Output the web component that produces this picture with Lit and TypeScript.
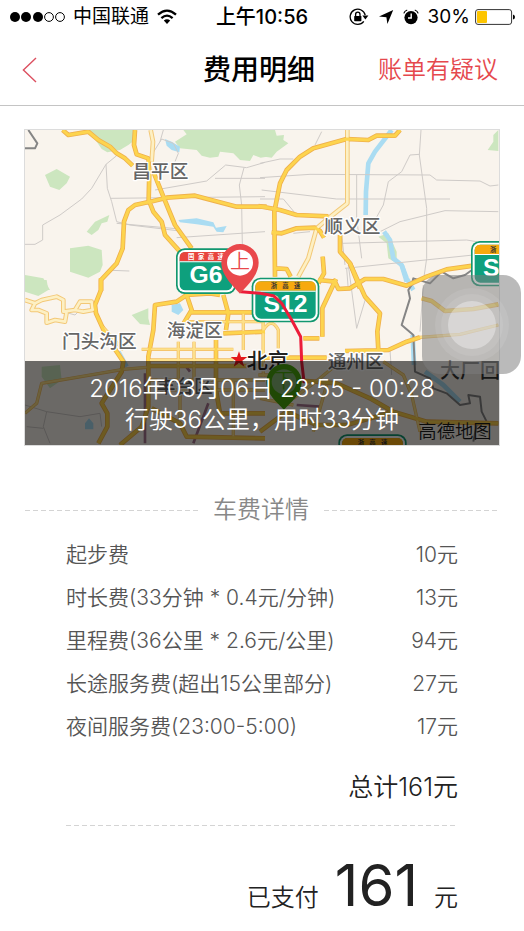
import { LitElement, html, svg, css } from "lit";
import { customElement } from "lit/decorators.js";

type Sheet = {
  shift: string;
  green: string;
  water: string;
  river: string;
  lane: string;
  road: string;
  minor: string;
  pale: string;
  border: string;
  rail: string;
};

// The map is drawn as four sheets, each with its own origin.
const SHEETS: Sheet[] = [
  {
    shift: "translate(-15 -15)",
    green:
      "M195 15L220 35 245 72 262 82 300 75 325 60 345 45 350 15ZM490 15L500 28 465 50 480 70 530 75 545 92 570 98 595 95 600 80 640 85 660 105 690 108 700 90 722 98 740 95V15ZM75 150L110 132 150 155 140 175 118 195 90 185ZM200 320L225 290 268 270 262 290 245 295 235 315 215 330ZM150 370L205 362 245 375 248 420 240 440 205 458 150 440ZM15 450L70 460 90 495H15Z",
    water:
      "M435 42L455 50 480 65 478 82 455 75 440 62ZM475 285L530 280 580 292 588 308 620 303 610 322 590 320 580 305 530 298 480 292Z",
    river: "",
    lane:
      "M15 358H45L68 345V300L120 270 185 222 215 190 258 118 290 92M258 118L262 190 275 230 290 290 330 300 480 318M290 295L480 312M272 220L735 215M405 195L560 168 617 120 680 128 735 112M470 338L735 320M672 128L658 180 665 240 667 360M585 160H735M395 90L425 42 460 55 475 85 465 110M275 436L328 438M420 50L430 15",
    road:
      "M128 15L145 30 205 20 235 45 270 65 290 85 315 100 338 122M345 15L342 60 350 88 385 100 388 140 386 225 400 260 425 290 435 330 480 380M400 140L430 215 465 300 515 370M243 498V465L290 415 308 370 312 290 325 255 345 240 400 228 440 218 525 212 650 245 740 245",
    minor: "",
    pale: "M392 15L399 50 395 110",
    border: "M25 15L52 55 45 70H15",
    rail: "",
  },
  {
    shift: "translate(705 -15)",
    green:
      "M-5 15V92L15 95 35 98 50 80 85 55 70 45 72 30 50 32 45 15ZM715 15L700 30 700 50 683 75 715 78ZM355 335L385 325 410 380 410 415 385 400 380 355Z",
    water: "",
    river: "M395 15L345 80 325 115 318 200 317 270M372 320L390 345 400 400 425 420 440 470",
    lane:
      "M0 115L60 102H100M0 158L150 148 510 150 530 165 660 168 690 183 715 180M5 195L230 222H570M483 15L478 90 500 250 500 400 490 470M478 88L450 90 425 140 385 170 370 240 345 285M290 150V280L305 400M360 320L420 290 555 257 715 260M100 325L150 320M245 355L620 345 650 350M255 430L640 390M260 430L265 495M185 20L165 60M0 222H70L110 270M245 330L255 420",
    road:
      "M-5 243L60 255 110 270 205 274M45 455L43 260 60 175 80 135 120 95 160 70 260 42 325 45 350 32 405 32 420 15M35 322L65 325 110 310 165 308 180 318 192 338M240 330V380L270 415 300 490M188 395L192 445 175 475M48 430L80 432 92 455",
    minor: "",
    pale: "M262 15V235L205 280 170 310 145 400 115 455",
    border: "",
    rail: "",
  },
  {
    shift: "translate(-15 450)",
    green:
      "M15 0H80L85 30 55 48 15 35ZM335 105L385 85V115L390 135 360 132ZM65 260L120 255 125 300 90 325 65 290Z",
    water: "M455 75L480 70 490 90 475 105 455 95ZM195 430L207 415 220 430V448H195Z",
    river: "M295 215L320 260",
    lane: "M15 375L80 395 180 410 240 400 245 440M80 395L70 440 90 490M130 95L165 105 180 90M20 440L70 445",
    road:
      "M243 -5V30L225 75 228 100 260 170 310 245 305 275 245 370 262 400V440L235 490M600 45L570 40 500 45 470 65 405 75 400 150 385 230V380L365 440 300 495M500 45L515 90 485 140M735 97H510M610 45L625 100 618 150M610 160L735 155M388 258H735M588 180V330L600 400 735 400M395 385L480 430 500 470 735 475",
    minor:
      "M15 400L50 370 65 310 310 268 380 262M365 208H640M490 125H735M475 185V300M522 185V300M390 240H640M385 300H735M730 100V290M670 100V210M420 330H735M480 300V420M640 300V470M248 140L310 210",
    pale:
      "M15 60L45 70 65 60 110 50 130 60V95L165 90 180 65H215L218 90 190 95 165 90M45 70L35 90 55 90 80 100V128L105 120 135 125 140 95",
    border: "",
    rail: "M375 280V490M565 370L520 490M500 262L510 275",
  },
  {
    shift: "translate(705 405)",
    green: "",
    water: "",
    river: "M425 0L440 40 460 75M458 210L462 300M495 320L550 360 600 410",
    lane: "M265 0L290 190 320 90M390 255L395 330M300 265L340 285M490 60L480 200",
    road:
      "M175 45L225 50 235 72 270 70 315 42 370 42 440 62 500 35 560 13 640 2M228 42L187 130V215M270 -5L315 95 360 145 352 200 355 255M255 258L385 255 440 230 480 217M485 100L515 108 555 138 640 132 715 118M130 220H178M-5 278H200M100 345L230 355 330 400 400 440 500 470 715 475M0 500L80 440 170 480 260 480 400 440",
    minor:
      "M10 175V275M10 195Q35 155 55 195V250M480 217L600 208 715 180M370 290L430 330 455 390 480 500M100 400L180 340 240 290M200 360L160 500M-5 330H60M0 400L100 420",
    pale: "",
    border:
      "M640 12L615 30 580 40 545 20 510 55 460 40 455 60 445 75 450 100 425 180 460 210 465 320 510 340 520 370 560 385 600 420 630 415 625 390 660 395 665 440 680 470 650 480 640 530",
    rail: "M110 420L180 425",
  },
];

const LABELS = [
  { text: "昌平区", x: 322, y: 145, kind: "district" },
  { text: "顺义区", x: 898, y: 310, kind: "district" },
  { text: "门头沟区", x: 111, y: 655, kind: "district" },
  { text: "海淀区", x: 425, y: 620, kind: "district" },
  { text: "通州区", x: 908, y: 715, kind: "district" },
  { text: "丰台区", x: 395, y: 790, kind: "district" },
  { text: "北京", x: 665, y: 715, kind: "city" },
  { text: "大厂回", x: 1245, y: 745, kind: "county" },
  { text: "高德地图", x: 1180, y: 924, kind: "brand" },
];

const SHIELDS = [
  { x: 453, y: 355, w: 180, h: 137, band: "#e8443c", ink: "#fff", top: "国家高速", name: "G6" },
  { x: 680, y: 443, w: 203, h: 134, band: "#f7a90f", ink: "#333", top: "浙高速", name: "S12" },
  { x: 1338, y: 333, w: 203, h: 136, band: "#f7a90f", ink: "#333", top: "浙高速", name: "S15" },
  { x: 940, y: 913, w: 205, h: 134, band: "#f7a90f", ink: "#333", top: "浙高速", name: "" },
];

const FARES = [
  ["起步费", "10元"],
  ["时长费(33分钟 * 0.4元/分钟)", "13元"],
  ["里程费(36公里 * 2.6元/公里)", "94元"],
  ["长途服务费(超出15公里部分)", "27元"],
  ["夜间服务费(23:00-5:00)", "17元"],
];

@customElement("route-map")
export class RouteMap extends LitElement {
  static styles = css`
    :host {
      display: block;
    }
    .canvas {
      display: block;
      width: 100%;
      height: 100%;
      font-family: "Liberation Sans", "Noto Sans CJK SC", sans-serif;
    }
    .line {
      fill: none;
      stroke-linejoin: round;
    }
    .green { fill: #cce6bf; }
    .water { fill: #aadcf2; }
    .river { stroke: #aadcf2; stroke-width: 14; }
    .lane { stroke: #cfcbc8; stroke-width: 3; }
    .pale-edge { stroke: #f3c877; stroke-width: 14; }
    .pale { stroke: #fdf0c4; stroke-width: 8; }
    .minor-edge { stroke: #f2bd62; stroke-width: 10; }
    .minor { stroke: #fde08a; stroke-width: 6; }
    .road-edge { stroke: #efb04c; stroke-width: 14; }
    .road { stroke: #fdd44e; stroke-width: 9; }
    .border { stroke: #858585; stroke-width: 6; }
    .rail { stroke: #a77790; stroke-width: 8; }
    .district,
    .city,
    .county {
      paint-order: stroke;
      stroke: #fff;
      stroke-width: 8;
      stroke-linejoin: round;
      font-weight: 500;
      fill: #666;
      font-size: 56px;
    }
    .city {
      fill: #222;
      font-size: 63px;
    }
    .county {
      fill: #333;
      font-size: 60px;
      stroke: none;
    }
    .brand {
      fill: #1c1c1c;
      font-size: 55px;
      font-weight: 350;
    }
    .band-text {
      font-size: 19px;
      font-weight: 700;
      text-anchor: middle;
      white-space: pre;
    }
    .shield-name {
      font-size: 74px;
      font-weight: 700;
      fill: #fff;
      text-anchor: middle;
    }
    .pin-text {
      font-size: 60px;
      font-weight: 350;
      text-anchor: middle;
    }
    .route {
      stroke: #ec1c3a;
      stroke-width: 9;
      stroke-linecap: round;
    }
  `;

  private layer(key: keyof Sheet, kind: string) {
    return SHEETS.map((s) => svg`<path transform=${s.shift} class=${kind} d=${s[key]}></path>`);
  }

  render() {
    return html`
      <svg class="canvas" viewBox="0 0 1422 945" preserveAspectRatio="xMidYMid slice" role="img" aria-label="行程地图">
        <rect width="1422" height="945" fill="#f9f4ed"></rect>
        ${this.layer("green", "green")} ${this.layer("water", "water")}
        ${this.layer("river", "line river")} ${this.layer("lane", "line lane")}
        ${this.layer("rail", "line rail")}
        ${this.layer("border", "line border")}
        ${this.layer("pale", "line pale-edge")} ${this.layer("minor", "line minor-edge")}
        ${this.layer("road", "line road-edge")} ${this.layer("pale", "line pale")}
        ${this.layer("minor", "line minor")} ${this.layer("road", "line road")}
        ${LABELS.map((l) => svg`<text class=${l.kind} x=${l.x} y=${l.y}>${l.text}</text>`)}
        <path fill="#e3191b" d="M642 664L648 681H667L652 692 658 710 642 699 626 710 632 692 617 681H636Z"></path>
        ${SHIELDS.map(
          (s) => svg`
            <g transform=${`translate(${s.x} ${s.y})`}>
              <rect width=${s.w} height=${s.h} rx="26" fill="#12976f"></rect>
              <rect x="5" y="5" width=${s.w - 10} height=${s.h - 10} rx="22" fill="#fff"></rect>
              <rect x="11" y="11" width=${s.w - 22} height=${s.h - 22} rx="17" fill="#0ea07d"></rect>
              <path fill=${s.band} d=${`M11 39V28Q11 11 28 11H${s.w - 28}Q${s.w - 11} 11 ${s.w - 11} 28V39Z`}></path>
              <path fill="#fff" d=${`M11 39H${s.w - 11}V42H11Z`}></path>
              <text class="band-text" x=${s.w / 2} y="32" fill=${s.ink}>${s.top.split("").join(s.top.length > 3 ? "  " : "   ")}</text>
              <text class="shield-name" x=${s.w / 2} y="104">${s.name}</text>
            </g>
          `,
        )}
        <path class="line route" d="M648 485L705 490 745 497 770 520 800 570 827 620 830 695 837 755"></path>
        <path fill="#e9484b" d="M645 491C635 478 589 440 589 398A56 56 0 0 1 701 398C701 440 655 478 645 491Z"></path>
        <circle cx="645" cy="398" r="39" fill="#fff"></circle>
        <text class="pin-text" x="645" y="417" fill="#e9484b">上</text>
        <path fill="#48a80c" d="M777 840C767 825 724 797 724 755A53 53 0 0 1 830 755C830 797 787 825 777 840Z"></path>
        <circle cx="777" cy="755" r="37" fill="#86b877"></circle>
        <text class="pin-text" x="777" y="774" fill="#48a80c">下</text>
      </svg>
    `;
  }
}

@customElement("app-root")
export class AppRoot extends LitElement {
  static styles = css`
    :host {
      display: block;
      min-height: 100vh;
      background: #fff;
      color: #222;
      font-family: Inter, "Noto Sans CJK SC", sans-serif;
    }
    .status {
      display: grid;
      grid-template-columns: 1fr auto 1fr;
      align-items: center;
      height: 34px;
      padding: 0 9px;
      color: #000;
      font-size: 19px;
      line-height: 24px;
    }
    .side {
      display: flex;
      align-items: center;
      gap: 8px;
    }
    .side.end {
      justify-content: flex-end;
      gap: 9px;
    }
    .power {
      display: flex;
      align-items: center;
      gap: 5px;
    }
    .clock {
      font-size: 20px;
      font-weight: 500;
    }
    svg {
      display: block;
    }
    .bar {
      display: grid;
      grid-template-columns: 1fr auto 1fr;
      align-items: center;
      height: 71px;
      padding: 0 26px 0 20px;
      border-bottom: 1px solid #c4c4c4;
    }
    .back,
    .touch {
      border: 0;
      padding: 0;
      background: none;
    }
    .back {
      justify-self: start;
    }
    .title {
      margin: 0;
      color: #000;
      font-size: 28px;
      line-height: 36px;
      font-weight: 500;
    }
    .dispute {
      justify-self: end;
      color: #e5484d;
      font-size: 24px;
      line-height: 36px;
      font-weight: 350;
      text-decoration: none;
    }
    .trip {
      position: relative;
      margin: 24px 25px 0;
    }
    .frame {
      position: relative;
      aspect-ratio: 474 / 315;
      outline: 1px solid #dcdcdc;
      overflow: hidden;
    }
    .map {
      height: 100%;
    }
    .caption {
      position: absolute;
      inset: auto 0 0 0;
      box-sizing: border-box;
      height: 84px;
      padding-top: 12px;
      background: rgba(0, 0, 0, 0.57);
      color: #fff;
      font-size: 24px;
      line-height: 31px;
      text-align: center;
      font-weight: 350;
    }
    .caption p {
      margin: 0;
    }
    .touch {
      position: absolute;
      top: 145px;
      right: -22px;
      display: grid;
      place-items: center;
      width: 99px;
      height: 99px;
      border-radius: 18px;
      background: rgba(125, 125, 125, 0.53);
    }
    .ring {
      display: grid;
      place-items: center;
      border-radius: 50%;
      background: rgba(255, 255, 255, 0.09);
    }
    .ring.outer {
      width: 74px;
      height: 74px;
    }
    .ring.middle {
      width: 62px;
      height: 62px;
    }
    .ring.inner {
      width: 48px;
      height: 48px;
      background: rgba(255, 255, 255, 0.35);
    }
    .section {
      display: flex;
      align-items: center;
      gap: 15px;
      margin: 47px 27px 0 25px;
      color: #888;
    }
    .section h2 {
      margin: 0;
      font-size: 24px;
      line-height: 36px;
      font-weight: 350;
    }
    .dash {
      flex: 1;
      height: 1px;
      background: repeating-linear-gradient(to right, #d4d4d4 0 5px, transparent 5px 8px);
    }
    .bill {
      padding: 5px 66px 0;
    }
    .fares {
      width: 100%;
      border-collapse: collapse;
      color: #555;
      font-size: 21px;
      font-weight: 350;
    }
    .fares th,
    .fares td {
      height: 43px;
      padding: 0;
      line-height: 30px;
      font-weight: inherit;
      text-align: left;
      white-space: nowrap;
    }
    .fares td {
      text-align: right;
    }
    .fares tfoot td {
      height: 77px;
      color: #222;
      font-size: 25px;
    }
    .bill .dash {
      flex: none;
    }
    .paid {
      display: flex;
      justify-content: flex-end;
      align-items: baseline;
      gap: 16px;
      margin: 23px 0 0;
      font-size: 24px;
      line-height: 72px;
      font-weight: 350;
    }
    .amount {
      font-size: 58px;
      font-weight: 400;
    }
  `;

  render() {
    return html`
      <div class="status">
        <div class="side">
          <svg width="56" height="12" viewBox="0 0 56 12" aria-hidden="true">
            <circle cx="6" cy="6" r="5"></circle>
            <circle cx="17" cy="6" r="5"></circle>
            <circle cx="29" cy="6" r="5"></circle>
            <circle cx="40" cy="6" r="4.4" fill="none" stroke="#000"></circle>
            <circle cx="51" cy="6" r="4.4" fill="none" stroke="#000"></circle>
          </svg>
          <span>中国联通</span>
          <svg width="20" height="16" viewBox="0 0 20 16" fill="none" stroke="#000" stroke-width="2.3" aria-hidden="true">
            <path d="M1 5.6Q10 -2.4 19 5.6M4.4 9.2Q10 4 15.6 9.2"></path>
            <path d="M6.8 11.6Q10 8.8 13.2 11.6L10 15Z" fill="#000" stroke="none"></path>
          </svg>
        </div>
        <span class="clock">上午10:56</span>
        <div class="side end">
          <svg width="20" height="18" viewBox="0 0 20 18" fill="none" stroke="#000" stroke-width="1.3" aria-hidden="true">
            <path d="M16.2 7.2A7.6 7.6 0 1 0 14.8 13.4"></path>
            <path d="M13.4 7.4H19.4L16.4 11.4Z" fill="#000" stroke="none"></path>
            <rect x="5.2" y="8" width="7.2" height="5.2" rx="0.6" fill="#000" stroke="none"></rect>
            <path d="M6.6 8.4V6.4A2.2 2.2 0 0 1 11 6.4V8.4"></path>
          </svg>
          <svg width="16" height="16" viewBox="0 0 16 16" aria-hidden="true">
            <path d="M15.2 1L9.4 15 8.4 8.2 1 7.4Z"></path>
          </svg>
          <svg width="16" height="16" viewBox="0 0 16 16" aria-hidden="true">
            <circle cx="8" cy="8.6" r="6.6"></circle>
            <path d="M0.8 4.4Q1.6 1.8 4.2 1M15.2 4.4Q14.4 1.8 11.8 1" fill="none" stroke="#000" stroke-width="1.2"></path>
            <path d="M8.2 4.6V9H5" fill="none" stroke="#fff" stroke-width="1.4"></path>
          </svg>
          <div class="power">
            <span>30%</span>
            <svg width="40" height="16" viewBox="0 0 40 16" aria-hidden="true">
              <rect x="0.6" y="0.6" width="36" height="14.8" rx="2.4" fill="#fff" stroke="#333"></rect>
              <rect x="2" y="2" width="10" height="12" rx="1" fill="#fdc500"></rect>
              <path d="M38 5.4Q40 6 40 8T38 10.6Z"></path>
            </svg>
          </div>
        </div>
      </div>

      <header class="bar">
        <button class="back" aria-label="返回">
          <svg width="18" height="28" viewBox="0 0 18 28" fill="none" stroke="#dc5060" stroke-width="1.4">
            <path d="M16 2L3.4 14 16 26"></path>
          </svg>
        </button>
        <h1 class="title">费用明细</h1>
        <a class="dispute" href="#dispute">账单有疑议</a>
      </header>

      <main>
        <section class="trip">
          <div class="frame">
            <route-map class="map"></route-map>
            <div class="caption">
              <p>2016年03月06日 23:55 - 00:28</p>
              <p>行驶36公里，用时33分钟</p>
            </div>
          </div>
          <button class="touch" aria-label="辅助触控">
            <span class="ring outer"><span class="ring middle"><span class="ring inner"></span></span></span>
          </button>
        </section>

        <div class="section">
          <span class="dash"></span>
          <h2>车费详情</h2>
          <span class="dash"></span>
        </div>

        <section class="bill">
          <table class="fares">
            <tbody>
              ${FARES.map(([name, price]) => html`<tr><th scope="row">${name}</th><td>${price}</td></tr>`)}
            </tbody>
            <tfoot>
              <tr><td colspan="2">总计161元</td></tr>
            </tfoot>
          </table>
          <div class="dash"></div>
          <p class="paid"><span>已支付</span><span class="amount">161</span><span>元</span></p>
        </section>
      </main>
    `;
  }
}
